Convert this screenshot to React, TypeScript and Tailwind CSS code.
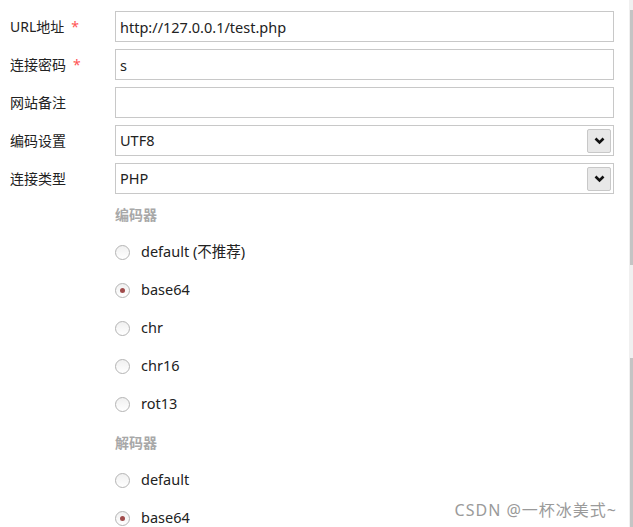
import { useState } from 'react'

const font = { fontFamily: '"Noto Sans", "Noto Sans CJK SC", sans-serif' }

interface FieldProps {
  label: string
  required?: boolean
  children: React.ReactNode
}

function Field({ label, required, children }: FieldProps) {
  return (
    <div className="flex h-[31px] items-center">
      <div className="w-[115px] shrink-0 pl-[10px] text-[14px] text-[#222]">
        {label}
        {required ? <span className="ml-[7px] text-[#f55]">*</span> : null}
      </div>
      {children}
    </div>
  )
}

function TextBox({ value }: { value: string }) {
  return (
    <input
      type="text"
      defaultValue={value}
      className="h-[31px] flex-1 border border-[#c8c8c8] bg-white px-[4px] text-[14.5px] text-[#222] outline-none"
      style={font}
    />
  )
}

function SelectBox({ value }: { value: string }) {
  return (
    <div className="flex h-[31px] flex-1 items-center justify-between border border-[#c8c8c8] bg-white pl-[4px] pr-[2px] text-[14.5px] text-[#222]">
      <span>{value}</span>
      <span className="flex h-[24px] w-[24px] items-center justify-center rounded-[2px] border border-[#c8c8c8] bg-[#e8e8e8]">
        <svg width="11" height="8" viewBox="0 0 11 8">
          <path d="M1.5 1.5 L5.5 5.5 L9.5 1.5" fill="none" stroke="#111" strokeWidth="2.6" />
        </svg>
      </span>
    </div>
  )
}

function Radio({ label, checked, onSelect }: { label: string; checked: boolean; onSelect: () => void }) {
  return (
    <div className="flex h-[38px] cursor-pointer items-center" onClick={onSelect}>
      <span className="flex h-[15px] w-[15px] items-center justify-center rounded-full border border-[#b4b4b4] bg-gradient-to-b from-[#f0f0f0] to-white">
        {checked ? <span className="h-[5px] w-[5px] rounded-full bg-[#a04b4b]" /> : null}
      </span>
      <span className="ml-[11px] text-[14.5px] text-[#222]">{label}</span>
    </div>
  )
}

export default function App() {
  const [encoder, setEncoder] = useState('base64')
  const [decoder, setDecoder] = useState('base64')

  return (
    <div className="relative flex h-[527px] w-[633px] overflow-hidden bg-white" style={font}>
      <div className="flex flex-1 flex-col pr-[15px] pt-[11px]">
        <div className="flex flex-col gap-[7px]">
          <Field label="URL地址" required>
            <TextBox value="http://127.0.0.1/test.php" />
          </Field>
          <Field label="连接密码" required>
            <TextBox value="s" />
          </Field>
          <Field label="网站备注">
            <TextBox value="" />
          </Field>
          <Field label="编码设置">
            <SelectBox value="UTF8" />
          </Field>
          <Field label="连接类型">
            <SelectBox value="PHP" />
          </Field>
        </div>

        <div className="mt-px flex flex-col pl-[115px]">
          <div className="flex h-[38px] items-center text-[14px] font-bold text-[#a8a8a8]">编码器</div>
          {['default (不推荐)', 'base64', 'chr', 'chr16', 'rot13'].map((item) => (
            <Radio
              key={item}
              label={item}
              checked={encoder === item}
              onSelect={() => setEncoder(item)}
            />
          ))}
          <div className="flex h-[38px] items-center text-[14px] font-bold text-[#a8a8a8]">解码器</div>
          {['default', 'base64'].map((item) => (
            <Radio
              key={item}
              label={item}
              checked={decoder === item}
              onSelect={() => setDecoder(item)}
            />
          ))}
        </div>
      </div>

      {/* scrollbar strip */}
      <div className="flex w-[4px] flex-col bg-[#f0f0f0] pt-[10px]">
        <div className="ml-px h-[255px] w-[3px] bg-[#c4c4c4]" />
        <div className="h-[93px]" />
        <div className="ml-px w-[3px] flex-1 bg-[#c4c4c4]" />
      </div>

      <div className="absolute bottom-[5px] right-[16px] text-[16px] tracking-[1px] text-[#9a9a9a]">CSDN @一杯冰美式~</div>
    </div>
  )
}
